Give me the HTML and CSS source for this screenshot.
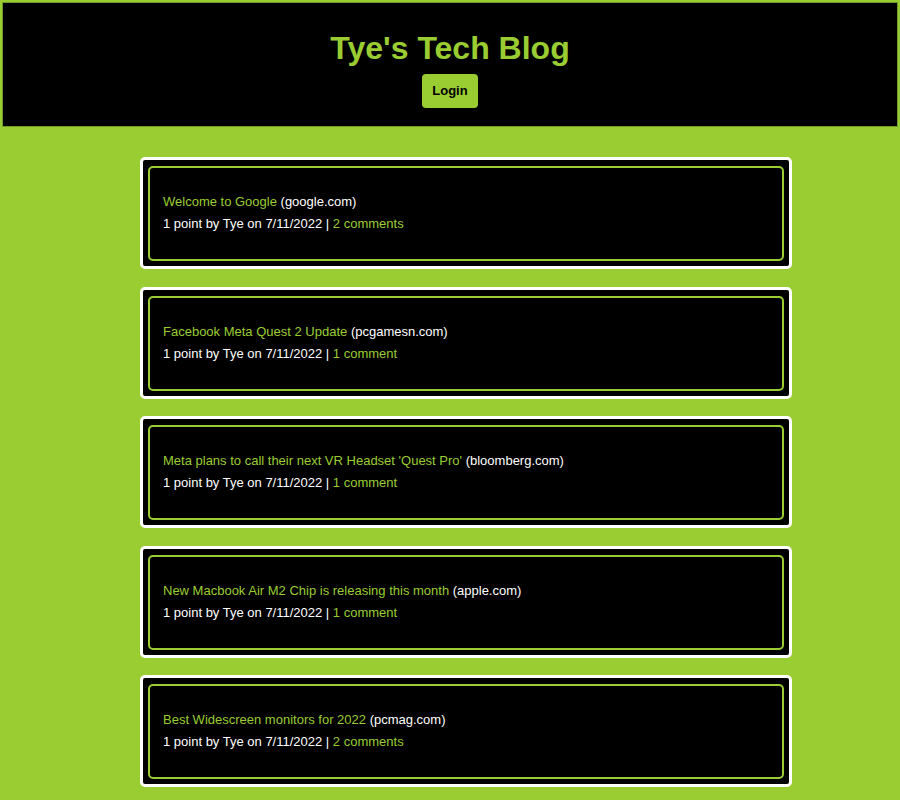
FILE: index.html
```html
<!DOCTYPE html>
<html lang="en">
<head>
<meta charset="utf-8">
<title>Tye's Tech Blog</title>
<link rel="stylesheet" href="styles.css">
</head>
<body>
<header class="site-header">
  <h1 class="site-title">Tye's Tech Blog</h1>
  <button class="login-btn">Login</button>
</header>
<main class="posts">
  <article class="post">
    <div class="post-inner">
      <div class="post-line"><a class="post-link" href="#">Welcome to Google</a> (google.com)</div>
      <div class="post-line">1 point by Tye on 7/11/2022 | <a class="post-link" href="#">2 comments</a></div>
    </div>
  </article>
  <article class="post">
    <div class="post-inner">
      <div class="post-line"><a class="post-link" href="#">Facebook Meta Quest 2 Update</a> (pcgamesn.com)</div>
      <div class="post-line">1 point by Tye on 7/11/2022 | <a class="post-link" href="#">1 comment</a></div>
    </div>
  </article>
  <article class="post">
    <div class="post-inner">
      <div class="post-line"><a class="post-link" href="#">Meta plans to call their next VR Headset 'Quest Pro'</a> (bloomberg.com)</div>
      <div class="post-line">1 point by Tye on 7/11/2022 | <a class="post-link" href="#">1 comment</a></div>
    </div>
  </article>
  <article class="post">
    <div class="post-inner">
      <div class="post-line"><a class="post-link" href="#">New Macbook Air M2 Chip is releasing this month</a> (apple.com)</div>
      <div class="post-line">1 point by Tye on 7/11/2022 | <a class="post-link" href="#">1 comment</a></div>
    </div>
  </article>
  <article class="post">
    <div class="post-inner">
      <div class="post-line"><a class="post-link" href="#">Best Widescreen monitors for 2022</a> (pcmag.com)</div>
      <div class="post-line">1 point by Tye on 7/11/2022 | <a class="post-link" href="#">2 comments</a></div>
    </div>
  </article>
</main>
</body>
</html>
```
FILE: styles.css
```css
html, body {
  margin: 0;
  padding: 0;
}
body {
  background: #9acd32;
  font-family: "Liberation Sans", Arial, sans-serif;
  font-size: 13px;
  color: #fff;
  overflow: hidden;
}
.site-header {
  margin: 2px;
  border: 1px solid #6f9a24;
  background: #000;
  padding: 27px 0 18px;
  display: flex;
  flex-direction: column;
  align-items: center;
  gap: 7px;
}
.site-title {
  margin: 0;
  font-size: 32px;
  font-weight: bold;
  color: #9acd32;
  line-height: 37px;
}
.login-btn {
  font-family: "Liberation Sans", Arial, sans-serif;
  font-size: 13px;
  font-weight: bold;
  color: #000;
  background: #9acd32;
  border: none;
  border-radius: 4px;
  padding: 10px;
  line-height: 14px;
  cursor: pointer;
}
.posts {
  margin: 30px 0 0 140px;
  width: 652px;
  display: flex;
  flex-direction: column;
  gap: 17.6px;
}
.post {
  background: #000;
  border: 3px solid #fff;
  border-radius: 5px;
  padding: 6px 5px 5px;
}
.post-inner {
  border: 2px solid #9acd32;
  border-radius: 5px;
  padding: 23px 13px 24px;
}
.post-line {
  line-height: 22px;
}
.post-link {
  color: #9acd32;
  text-decoration: none;
}
```
